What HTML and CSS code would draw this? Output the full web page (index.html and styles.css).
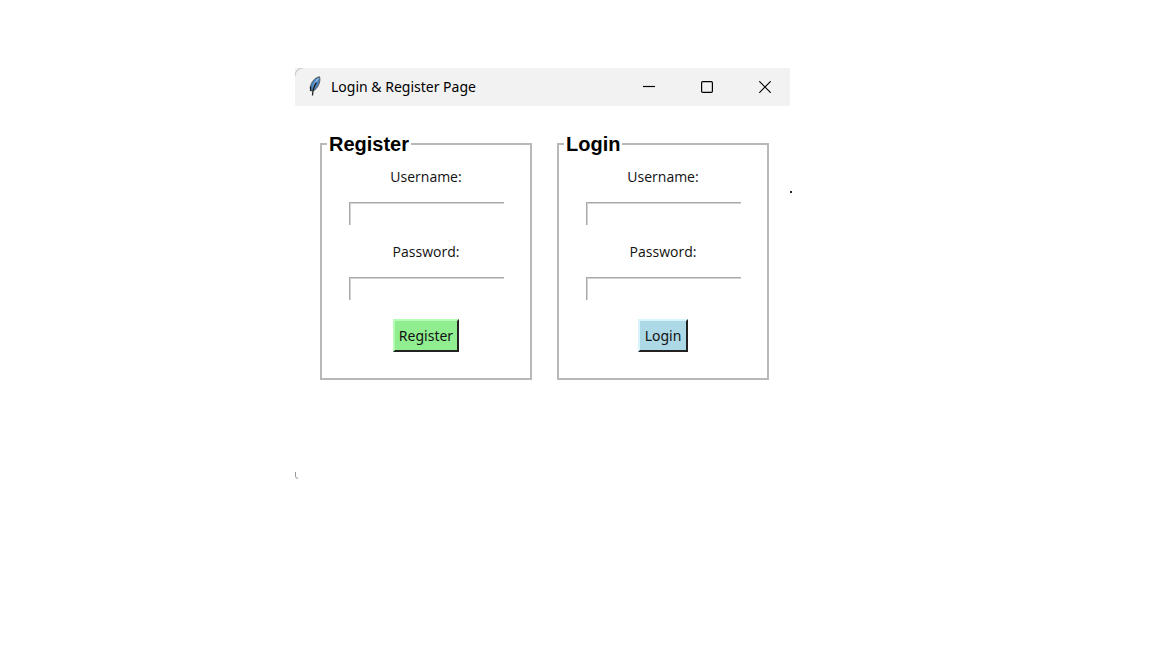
FILE: index.html
```html
<!DOCTYPE html>
<html lang="en">
<head>
<meta charset="utf-8">
<title>Login &amp; Register Page</title>
<link rel="stylesheet" href="styles.css">
</head>
<body>
<main class="desktop">
  <section class="window">
    <header class="titlebar">
      <svg class="feather" width="14" height="20" viewBox="0 0 14 20" aria-hidden="true">
        <path d="M11.500 .8C7.500 1.200 3.200 5.500 2.200 11.500L2.800 15 6.800 14C10.800 10.500 12.800 4.800 11.500 .8Z" fill="#4a86c5" stroke="#5a5a58" stroke-width="1"/>
        <path d="M10.500 2.500C8.500 4 6.500 8 5.500 12" fill="none" stroke="#8ebbe5" stroke-width="1.500"/>
        <path d="M8.500 6.500C6.200 9.500 4.800 13 4.500 19.500M2.600 10.500V15" fill="none" stroke="#1d1d1d" stroke-width="1.300"/>
      </svg>
      <h1 class="title">Login &amp; Register Page</h1>
      <div class="controls">
        <button class="control" type="button" aria-label="Minimize"><svg width="12" height="12" viewBox="0 0 12 12"><path d="M0 5.500H12"/></svg></button>
        <button class="control" type="button" aria-label="Maximize"><svg width="12" height="12" viewBox="0 0 12 12"><rect x=".6" y=".6" width="10.800" height="10.800" rx="1.200"/></svg></button>
        <button class="control" type="button" aria-label="Close"><svg width="12" height="12" viewBox="0 0 12 12"><path d="M.3.3 11.700 11.700M11.700.3.3 11.700"/></svg></button>
      </div>
    </header>
    <div class="forms">
      <form class="form">
        <fieldset class="group">
          <legend class="legend">Register</legend>
          <div class="fields">
            <label class="label" for="register-user">Username:</label>
            <input class="entry" id="register-user" type="text">
            <label class="label" for="register-pass">Password:</label>
            <input class="entry" id="register-pass" type="password">
            <button class="action action-register" type="button">Register</button>
          </div>
        </fieldset>
      </form>
      <form class="form">
        <fieldset class="group">
          <legend class="legend">Login</legend>
          <div class="fields">
            <label class="label" for="login-user">Username:</label>
            <input class="entry" id="login-user" type="text">
            <label class="label" for="login-pass">Password:</label>
            <input class="entry" id="login-pass" type="password">
            <button class="action action-login" type="button">Login</button>
          </div>
        </fieldset>
      </form>
    </div>
    <svg class="corner" width="3" height="7" viewBox="0 0 3 7" aria-hidden="true"><path d="M.5 0V4Q.5 6.500 3 6.500" fill="none" stroke="#999"/></svg>
  </section>
  <span class="dot"></span>
</main>
</body>
</html>
```
FILE: styles.css
```css
* {
  box-sizing: border-box;
}

body {
  margin: 0;
  background: #fff;
  color: #111;
  font-family: "Noto Sans", "Open Sans", sans-serif;
  font-size: 14px;
}

.desktop {
  display: flex;
  padding: 68px 24px 24px 295px;
}

.window {
  flex: 0 1 495px;
}

.titlebar {
  display: flex;
  align-items: center;
  height: 38px;
  padding: 0 0 2px 13px;
  background: radial-gradient(circle at 8px 8px, transparent 7px, #c4c4c4 8px, #f2f2f2 9px) 0 0 / 8px 8px no-repeat #f2f2f2;
}

.feather {
  flex: none;
  margin-right: 9px;
}

.title {
  margin: 0;
  padding-top: 1px;
  color: #000;
  font-size: 14px;
  font-weight: 400;
  line-height: 20px;
  white-space: nowrap;
}

.controls {
  display: flex;
  margin-left: auto;
}

.control {
  display: flex;
  align-items: center;
  justify-content: center;
  width: 58px;
  height: 36px;
  padding: 2px 0 0 7px;
  border: 0;
  background: transparent;
}

.control svg {
  fill: none;
  stroke: #000;
  stroke-width: 1.2;
}

.forms {
  display: flex;
  gap: 25px;
  padding: 26px 21px 92px 25px;
}

.form {
  flex: 1;
  min-width: 0;
}

.group {
  min-width: 0;
  margin: 0;
  padding: 0 5px 26px;
  border: 2px solid #b8b8b8;
}

.legend {
  padding: 0 2px;
  color: #000;
  font: bold 20px/24px "Liberation Sans", Arial, sans-serif;
}

.fields {
  display: flex;
  flex-direction: column;
  align-items: center;
  padding: 11px 20px 0;
}

.label {
  margin-bottom: 15px;
  font-family: "Open Sans", "Noto Sans", sans-serif;
  font-size: 14px;
  line-height: 20px;
}

.entry {
  width: 100%;
  max-width: 155px;
  height: 23px;
  margin-bottom: 17px;
  padding: 0 4px;
  border: 0;
  background: #fff;
  box-shadow: inset 1px 1px #a8a8a8, inset 2px 2px #d4d4d4;
  font: inherit;
}

.action {
  height: 33px;
  margin-top: 2px;
  padding: 0 5px;
  border: 2px solid #222;
  color: #111;
  font: inherit;
}

.action-register {
  padding: 0 4px;
  border-top-color: #b4ffb4;
  border-left-color: #b4ffb4;
  background: #90ee90;
}

.action-login {
  border-top-color: #d8f5ff;
  border-left-color: #d8f5ff;
  background: #add8e6;
}

.corner {
  display: block;
}

.dot {
  width: 2px;
  height: 2px;
  margin-top: 123px;
  background: #222;
}
```
